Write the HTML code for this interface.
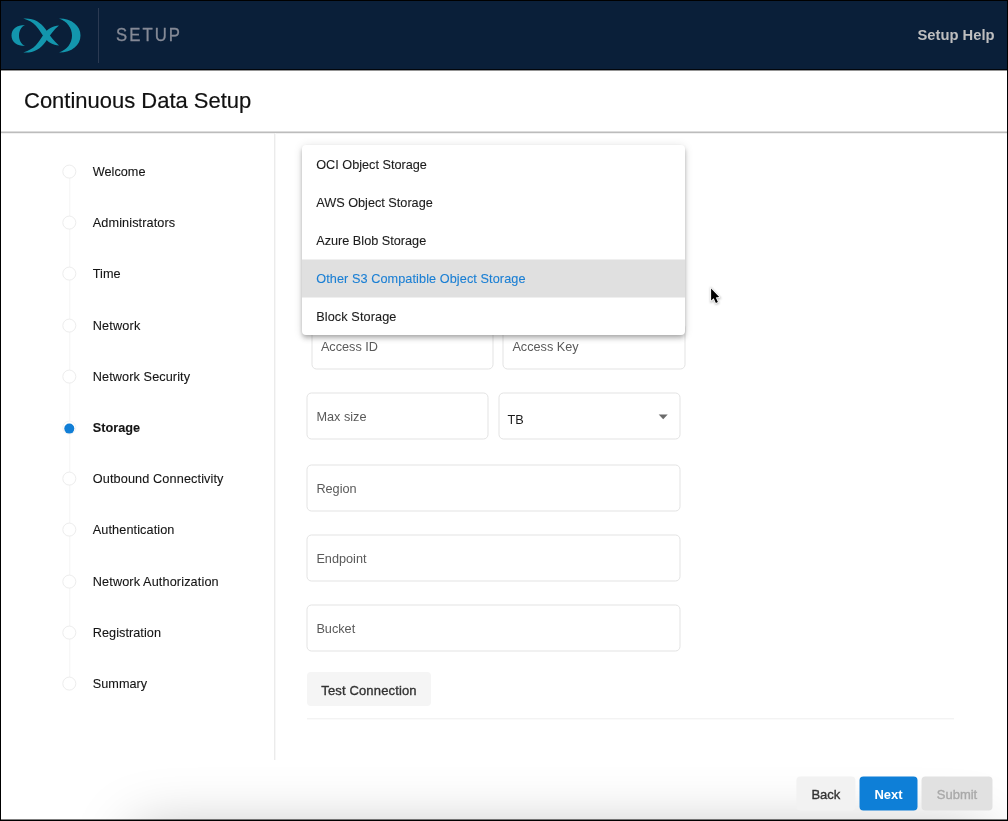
<!DOCTYPE html>
<html lang="en">
<head>
<meta charset="utf-8">
<title>Continuous Data Setup</title>
<style>
*{box-sizing:border-box;margin:0;padding:0}
html,body{width:1008px;height:821px;overflow:hidden;background:#fff}
body{font-family:"Liberation Sans",Arial,Helvetica,sans-serif;font-size:13px;color:#1c1c1c;position:relative}
#app{position:absolute;left:0;top:0;width:1008px;height:821px;background:#fff;transform:translateZ(0);will-change:transform}
.abs{position:absolute}
#frame{position:absolute;left:0;top:0;width:1008px;height:821px;border:1px solid #000;z-index:50;pointer-events:none}
#frame::after{content:"";position:absolute;left:0;bottom:0;width:1006px;height:1px;background:rgba(0,0,0,.5)}
#header{position:absolute;left:1px;top:1px;width:1006px;height:69px;background:#0a1f39;border-bottom:1px solid #02060d}
#header::after{content:"";position:absolute;left:0;top:69px;width:1006px;height:1px;background:rgba(0,0,0,.42)}
#logo{position:absolute;left:0;top:0}
#hdiv{position:absolute;left:97px;top:7px;width:1px;height:55px;background:#2b3a52}
#setup{position:absolute;left:114.8px;top:23.5px;font-size:17.6px;line-height:22px;letter-spacing:2.15px;color:#858a96;white-space:nowrap;transform:translateY(-0.9px) scaleX(0.95);transform-origin:0 0;-webkit-text-stroke:0.3px #858a96}
#help{position:absolute;right:12.5px;top:25px;font-size:14.75px;line-height:18px;font-weight:bold;color:#bebebf;white-space:nowrap}
#titlebar{position:absolute;left:1px;top:71px;width:1006px;height:63px;background:#fff;border-bottom:1px solid #f1f1f1;box-shadow:inset 0 -1px 0 #bcbcbc, inset 0 -2px 0 #dcdcdc}
#title{position:absolute;left:23.3px;top:17.5px;font-size:22.6px;line-height:26px;color:#111;white-space:nowrap;transform:translateY(-0.7px) scaleX(0.973);transform-origin:0 0;-webkit-text-stroke:0.2px #111}
#vsep{position:absolute;left:274px;top:133px;width:2px;height:627px;background:linear-gradient(to right,#ebebeb 0,#ebebeb 1px,#f7f7f7 1px,#f7f7f7 2px)}
#steps{position:absolute;left:0;top:0;transform:translate(0.3px,0.6px)}
#stepline{position:absolute;left:68.6px;top:171px;width:1.6px;height:512px;background:#f4f4f4}
.step{position:absolute;left:62px;height:14px;white-space:nowrap}
.step i{position:absolute;left:0;top:0;width:14px;height:14px;border-radius:50%;border:1px solid #ededed;background:#fff}
.step.on i{border-color:#f3f3f3}
.step.on i::after{content:"";position:absolute;left:1px;top:1.5px;width:10px;height:10px;border-radius:50%;background:#117ed6}
.step span{position:absolute;left:30.5px;top:-1px;font-size:12.7px;line-height:16px;color:#141414;-webkit-text-stroke:0.1px #141414}
.step.on span{font-weight:bold}
.inp{position:absolute;height:47px;transform:translate(-0.5px,-0.5px);border:1px solid #e3e3e3;border-radius:5px;background:#fff}
.inp span{position:absolute;left:8.5px;top:15px;transform:translate(0.4px,0.6px);font-size:12.7px;line-height:16px;color:#5a5a5a;white-space:nowrap}
#panel{position:absolute;left:302px;top:145px;width:383px;height:190px;background:#fff;border-radius:4px;box-shadow:0 2px 4px -1px rgba(0,0,0,.2),0 4px 5px 0 rgba(0,0,0,.14),0 1px 10px 0 rgba(0,0,0,.12);z-index:5;overflow:hidden}
.opt{position:absolute;left:0;width:383px;height:38px;transform:translateY(0.5px);-webkit-text-stroke:0.1px currentColor;padding-left:14.2px;font-size:12.7px;line-height:38px;color:#1c1c1c;white-space:nowrap}
.opt span{display:inline-block;transform:translateY(0.5px)}
.opt.sel{background:#e0e0e0;color:#1a7fd4}
.btn{position:absolute;height:34px;border-radius:4px;font-size:13px;line-height:37px;text-align:center;white-space:nowrap}
#shadow{position:absolute;left:135px;top:830px;width:850px;height:80px;z-index:1;box-shadow:0 0 60px 0 rgba(0,0,0,.26)}
</style>
</head>
<body>
<div id="app">
<div id="shadow"></div>
<div id="header">
  <svg id="logo" width="97" height="70" viewBox="1 1 97 70">
    <g fill="#1396ad">
      <path d="M25,25 C17,25 11.5,29 11.5,35.5 C11.5,42 17,46 25,46 C21,44 19,40 19,35.5 C19,31 21,27 25,25 Z"/>
      <path d="M59,18.5 C72,18.5 80.5,26 80.5,35.5 C80.5,45 72,52.5 59,52.5 C67,50 72,43 72,35.5 C72,28 67,21 59,18.5 Z"/>
      <path d="M23.3,18.6 C33,17.8 40.3,21.6 45.8,29.6 C49.8,35.5 54,41.5 59,45.5 C53,45.1 47.4,42.2 43.4,36.3 C38.4,28.9 35,21.8 23.3,18.6 Z"/>
      <path d="M23.3,52.4 C33,53.2 40.3,49.4 45.8,41.4 C49.8,35.5 54,29.5 59,25.5 C53,25.9 47.4,28.8 43.4,34.7 C38.4,42.1 35,49.2 23.3,52.4 Z"/>
    </g>
  </svg>
  <div id="hdiv"></div>
  <div id="setup">SETUP</div>
  <div id="help">Setup Help</div>
</div>
<div id="titlebar"><div id="title">Continuous Data Setup</div></div>
<div id="vsep"></div>

<div id="steps">
  <div id="stepline"></div>
  <div class="step" style="top:164.0px"><i></i><span>Welcome</span></div>
  <div class="step" style="top:215.2px"><i></i><span style="letter-spacing:0.1px">Administrators</span></div>
  <div class="step" style="top:266.4px"><i></i><span>Time</span></div>
  <div class="step" style="top:317.6px"><i></i><span style="letter-spacing:0.16px">Network</span></div>
  <div class="step" style="top:368.8px"><i></i><span style="letter-spacing:0.09px">Network Security</span></div>
  <div class="step on" style="top:420.0px"><i></i><span>Storage</span></div>
  <div class="step" style="top:471.2px"><i></i><span style="letter-spacing:0.115px">Outbound Connectivity</span></div>
  <div class="step" style="top:522.4px"><i></i><span style="letter-spacing:0.09px">Authentication</span></div>
  <div class="step" style="top:573.6px"><i></i><span style="letter-spacing:0.12px">Network Authorization</span></div>
  <div class="step" style="top:624.8px"><i></i><span style="letter-spacing:0.04px">Registration</span></div>
  <div class="step" style="top:676.0px"><i></i><span>Summary</span></div>
</div>

<div id="panel">
  <div class="opt" style="top:0"><span>OCI Object Storage</span></div>
  <div class="opt" style="top:38px"><span>AWS Object Storage</span></div>
  <div class="opt" style="top:76px"><span>Azure Blob Storage</span></div>
  <div class="opt sel" style="top:114px;letter-spacing:0.08px"><span>Other S3 Compatible Object Storage</span></div>
  <div class="opt" style="top:152px;letter-spacing:0.1px"><span>Block Storage</span></div>
</div>

<div class="inp" style="left:312px;top:322.5px;width:182px"><span style="left:8px">Access ID</span></div>
<div class="inp" style="left:503px;top:322.5px;width:182.5px"><span>Access Key</span></div>
<div class="inp" style="left:307px;top:393px;width:182px"><span>Max size</span></div>
<div class="inp" style="left:498.5px;top:393px;width:182.5px"><span style="color:#1c1c1c;top:18px;left:8px;transform:translate(0.6px,0.7px)">TB</span>
  <svg class="abs" style="left:158px;top:20px;transform:translate(0.2px,0.6px)" width="11" height="6" viewBox="0 0 11 6"><path d="M1,0.5 L10,0.5 L5.5,5.2 Z" fill="#6b6b6b"/></svg>
</div>
<div class="inp" style="left:307px;top:464.5px;width:374px"><span>Region</span></div>
<div class="inp" style="left:307px;top:535px;width:374px"><span>Endpoint</span></div>
<div class="inp" style="left:307px;top:605px;width:374px"><span>Bucket</span></div>

<div class="btn" style="left:307px;top:672px;width:124px;background:#f5f5f5;color:#333;letter-spacing:0.15px;-webkit-text-stroke:0.35px #333">Test Connection</div>
<div class="abs" style="left:307px;top:718px;width:647px;height:2px;background:linear-gradient(#f3f3f3 50%,#fafafa 50%)"></div>

<div class="btn" style="left:796px;top:776px;width:59px;transform:translate(0.4px,0.4px);background:#f2f2f2;color:#333;-webkit-text-stroke:0.35px #333;z-index:3">Back</div>
<div class="btn" style="left:859px;top:776px;width:58px;transform:translate(0.5px,0.4px);background:#0e7fd7;color:#fff;font-weight:bold;z-index:3">Next</div>
<div class="btn" style="left:921px;top:776px;width:71px;transform:translate(0.5px,0.4px);background:#e1e1e1;color:#a9a9a9;-webkit-text-stroke:0.35px #a9a9a9;z-index:3">Submit</div>

<svg class="abs" style="left:705px;top:283px;z-index:20;overflow:visible" width="24" height="28" viewBox="-4 -4 24 28">
  <defs><filter id="cs" x="-50%" y="-50%" width="200%" height="200%"><feGaussianBlur stdDeviation="1"/></filter></defs>
  <path d="M2.1,1.5 L2.1,13.6 L4.7,11.3 L6.9,15.9 L8.9,15 L6.8,10.5 L10.2,10.1 Z" transform="translate(0.3,0.8)" fill="#000" opacity=".27" stroke="#000" stroke-width="2" filter="url(#cs)"/>
  <path d="M2.1,1.5 L2.1,13.6 L4.7,11.3 L6.9,15.9 L8.9,15 L6.8,10.5 L10.2,10.1 Z" fill="#000" stroke="#fff" stroke-width="1.6" stroke-linejoin="round" paint-order="stroke"/>
</svg>

<div id="frame"></div>
</div>
</body>
</html>
